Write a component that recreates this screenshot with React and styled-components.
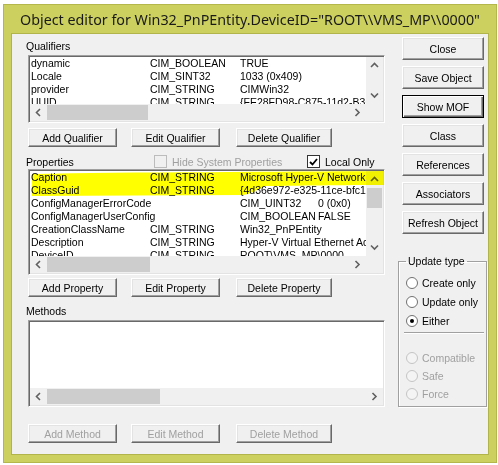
import React from "react";
import styled, { createGlobalStyle, css } from "styled-components";

const GlobalStyle = createGlobalStyle`
  html, body { margin: 0; padding: 0; background: #fff; }
  body { font-family: "Liberation Sans", Arial, sans-serif; font-size: 10.5px; color: #000; }
`;

const Frame = styled.div`
  box-sizing: border-box;
  width: 494px;
  height: 459px;
  margin: 4px 0 0 3px;
  background: #ccd05f;
  border: 1px solid #b4b84c;
  display: flex;
  flex-direction: column;
  padding: 0 7px 7px 7px;
`;

const TitleBar = styled.div`
  height: 28px;
  display: flex;
  align-items: center;
  padding-left: 9px;
  font-family: "Noto Sans", "Open Sans", sans-serif;
  font-size: 14.3px;
  color: #1a1a1a;
  white-space: nowrap;
  overflow: hidden;
`;

const Client = styled.div`
  flex: 1;
  background: #f0f0f0;
  border: 1px solid #b1b44a;
  display: grid;
  grid-template-columns: 357px 89px;
  column-gap: 13px;
  padding-left: 16px;
`;

const LeftCol = styled.div`
  display: flex;
  flex-direction: column;
  padding-top: 6px;
`;

const RightCol = styled.div`
  display: flex;
  flex-direction: column;
  padding-top: 3px;
`;

const SectionLabel = styled.div`
  height: 13px;
  line-height: 13px;
  margin-left: -2px;
  margin-top: ${(p) => p.$mt || 0}px;
  margin-bottom: 2px;
`;

const ListBox = styled.div`
  position: relative;
  box-sizing: border-box;
  height: ${(p) => p.$h}px;
  margin-top: ${(p) => p.$mt || 0}px;
  border: 1px solid;
  border-color: #a0a0a0 #fff #fff #a0a0a0;
  box-shadow: inset 1px 1px #696969, inset -1px -1px #e3e3e3;
  background: #fff;
  padding: 1px;
  display: grid;
  grid-template-columns: ${(p) => (p.$noV ? "1fr" : "1fr 17px")};
  grid-template-rows: 1fr 17px;
`;

const Rows = styled.div`
  overflow: hidden;
  padding-left: 1px;
`;

const Row = styled.div`
  display: flex;
  height: 13px;
  line-height: 13px;
  white-space: nowrap;
`;

const Cell = styled.span`
  flex: 0 0 auto;
  min-width: ${(p) => p.$w || 0}px;
  padding-right: 2px;
  box-sizing: border-box;
`;

const VScroll = styled.div`
  background: #f0f0f0;
  display: flex;
  flex-direction: column;
`;

const HScroll = styled.div`
  background: #f0f0f0;
  display: flex;
  align-items: center;
  grid-column: 1;
`;

const Corner = styled.div`
  background: #f0f0f0;
`;

const Arrow = styled.div`
  flex: 0 0 17px;
  height: ${(p) => (p.$v ? "17px" : "100%")};
  width: 17px;
  display: flex;
  align-items: center;
  justify-content: center;
`;

const Track = styled.div`
  flex: 1;
  align-self: stretch;
  display: flex;
  flex-direction: ${(p) => (p.$v ? "column" : "row")};
`;

const Thumb = styled.div`
  background: #cdcdcd;
  ${(p) =>
    p.$v
      ? css`
          height: ${p.$len}px;
          margin: 0 1px;
        `
      : css`
          width: ${p.$len}px;
          margin: 1px 0;
        `}
`;

const Highlight = styled.svg`
  position: absolute;
  left: 0;
  top: 0;
  width: 357px;
  height: 30px;
  pointer-events: none;
  mix-blend-mode: multiply;
`;

const ButtonRow = styled.div`
  display: flex;
  margin-top: ${(p) => p.$mt || 0}px;
`;

const Button = styled.button`
  box-sizing: border-box;
  width: ${(p) => p.$w}px;
  height: ${(p) => p.$h || 19}px;
  margin-left: ${(p) => p.$ml || 0}px;
  margin-top: ${(p) => p.$mt || 0}px;
  padding: 0;
  font-family: "Liberation Sans", Arial, sans-serif;
  font-size: 10.5px;
  color: ${(p) => (p.disabled ? "#a0a0a0" : "#000")};
  background: #f0f0f0;
  border: 1px solid;
  border-color: #fff #696969 #696969 #fff;
  box-shadow: inset -1px -1px #a0a0a0, inset 1px 1px #e3e3e3;
  ${(p) =>
    p.$default &&
    css`
      border-color: #000;
      box-shadow: inset 1px 1px #fff, inset -1px -1px #696969, inset -2px -2px #a0a0a0;
    `}
`;

const PropHeader = styled.div`
  display: grid;
  grid-template-columns: 128px 153px auto;
  align-items: center;
  height: 13px;
  margin: 8px 0 0 -2px;
`;

const CheckLine = styled.label`
  display: flex;
  align-items: center;
  gap: 5px;
  white-space: nowrap;
  color: ${(p) => (p.$disabled ? "#a0a0a0" : "#000")};
`;

const Box = styled.span`
  box-sizing: border-box;
  width: 13px;
  height: 13px;
  border: 1px solid ${(p) => (p.$disabled ? "#bcbcbc" : "#333")};
  background: ${(p) => (p.$disabled ? "#f0f0f0" : "#fff")};
  display: flex;
  align-items: center;
  justify-content: center;
`;

const Group = styled.fieldset`
  box-sizing: border-box;
  margin: 21px 0 0 0;
  padding: 0;
  height: 152px;
  border: 1px solid #a0a0a0;
  box-shadow: 1px 1px 0 #fff, inset 1px 1px 0 #fff;
`;

const Legend = styled.legend`
  margin-left: 7px;
  padding: 0 2px;
  line-height: 13px;
  font-size: 10.5px;
`;

const RadioRow = styled.div`
  display: flex;
  align-items: center;
  gap: 4px;
  height: ${(p) => p.$h}px;
  padding-left: 7px;
  margin-top: ${(p) => p.$mt || 0}px;
  white-space: nowrap;
  color: ${(p) => (p.$disabled ? "#a0a0a0" : "#000")};
`;

const Circle = styled.span`
  box-sizing: border-box;
  width: 12px;
  height: 12px;
  border-radius: 50%;
  border: 1px solid ${(p) => (p.$disabled ? "#c4c4c4" : "#707070")};
  background: ${(p) => (p.$disabled ? "#f4f4f4" : "#fff")};
  display: flex;
  align-items: center;
  justify-content: center;
  &::after {
    content: "";
    width: 4px;
    height: 4px;
    border-radius: 50%;
    background: ${(p) => (p.$on ? "#000" : "transparent")};
  }
`;

const Separator = styled.div`
  height: 1px;
  margin: 2px 2px 0 5px;
  background: #a0a0a0;
  box-shadow: 0 1px 0 #fff;
`;

const Chevron = ({ dir }) => {
  const pts = {
    up: "1,5 4.5,1.5 8,5",
    down: "1,1.5 4.5,5 8,1.5",
    left: "5,1 1.5,4.5 5,8",
    right: "1.5,1 5,4.5 1.5,8",
  }[dir];
  const vert = dir === "up" || dir === "down";
  return (
    <svg width={vert ? 9 : 7} height={vert ? 7 : 9} viewBox={vert ? "0 0 9 7" : "0 0 7 9"}>
      <polyline points={pts} fill="none" stroke="#606060" strokeWidth="1.6" />
    </svg>
  );
};

const HBar = ({ thumb }) => (
  <HScroll>
    <Arrow>
      <Chevron dir="left" />
    </Arrow>
    <Track>
      <Thumb $len={thumb} />
    </Track>
    <Arrow>
      <Chevron dir="right" />
    </Arrow>
  </HScroll>
);

const VBar = ({ thumb }) => (
  <VScroll>
    <Arrow $v>
      <Chevron dir="up" />
    </Arrow>
    <Track $v>{thumb ? <Thumb $v $len={thumb} /> : null}</Track>
    <Arrow $v>
      <Chevron dir="down" />
    </Arrow>
  </VScroll>
);

const QUALIFIERS = [
  ["dynamic", "CIM_BOOLEAN", "TRUE"],
  ["Locale", "CIM_SINT32", "1033 (0x409)"],
  ["provider", "CIM_STRING", "CIMWin32"],
  ["UUID", "CIM_STRING", "{FE28FD98-C875-11d2-B352-00104BC97924}"],
];

const PROPERTIES = [
  ["Caption", "CIM_STRING", "Microsoft Hyper-V Network Adapter"],
  ["ClassGuid", "CIM_STRING", "{4d36e972-e325-11ce-bfc1-08002be10318}"],
  ["ConfigManagerErrorCode", "CIM_UINT32", "0 (0x0)", true],
  ["ConfigManagerUserConfig", "CIM_BOOLEAN", "FALSE", true],
  ["CreationClassName", "CIM_STRING", "Win32_PnPEntity"],
  ["Description", "CIM_STRING", "Hyper-V Virtual Ethernet Adapter"],
  ["DeviceID", "CIM_STRING", "ROOT\\VMS_MP\\0000"],
];

const DataRows = ({ rows }) => (
  <Rows>
    {rows.map(([name, type, value, wide]) => (
      <Row key={name}>
        <Cell $w={wide ? 209 : 119}>{name}</Cell>
        <Cell $w={wide ? 78 : 90}>{type}</Cell>
        <Cell>{value}</Cell>
      </Row>
    ))}
  </Rows>
);

const Radio = ({ label, on, disabled, h, mt }) => (
  <RadioRow $h={h} $mt={mt} $disabled={disabled}>
    <Circle $on={on} $disabled={disabled} />
    {label}
  </RadioRow>
);

export default function App() {
  return (
    <>
      <GlobalStyle />
      <Frame>
        <TitleBar>{'Object editor for Win32_PnPEntity.DeviceID="ROOT\\\\VMS_MP\\\\0000"'}</TitleBar>
        <Client>
          <LeftCol>
            <SectionLabel>Qualifiers</SectionLabel>
            <ListBox $h={68}>
              <DataRows rows={QUALIFIERS} />
              <VBar />
              <HBar thumb={101} />
              <Corner />
            </ListBox>
            <ButtonRow $mt={5}>
              <Button $w={89}>Add Qualifier</Button>
              <Button $w={89} $ml={14}>Edit Qualifier</Button>
              <Button $w={96} $ml={16}>Delete Qualifier</Button>
            </ButtonRow>

            <PropHeader>
              <span>Properties</span>
              <CheckLine $disabled>
                <Box $disabled />
                Hide System Properties
              </CheckLine>
              <CheckLine>
                <Box>
                  <svg width="9" height="8" viewBox="0 0 9 8">
                    <polyline points="1,4 3.5,6.5 8,1" fill="none" stroke="#000" strokeWidth="1.8" />
                  </svg>
                </Box>
                Local Only
              </CheckLine>
            </PropHeader>
            <ListBox $h={106} $mt={1}>
              <DataRows rows={PROPERTIES} />
              <VBar thumb={20} />
              <HBar thumb={103} />
              <Corner />
              <Highlight viewBox="0 0 357 30" preserveAspectRatio="none">
                <path
                  d="M3,4 C100,2 250,2 355,1 L355,15 C300,15 260,16 236,16 C228,20 222,24 214,25 L3,26 Z"
                  fill="#ffff00"
                />
              </Highlight>
            </ListBox>
            <ButtonRow $mt={3}>
              <Button $w={89}>Add Property</Button>
              <Button $w={89} $ml={14}>Edit Property</Button>
              <Button $w={96} $ml={16}>Delete Property</Button>
            </ButtonRow>

            <SectionLabel $mt={8}>Methods</SectionLabel>
            <ListBox $h={87} $noV>
              <Rows />
              <HBar thumb={113} />
            </ListBox>
            <ButtonRow $mt={17}>
              <Button $w={89} disabled>Add Method</Button>
              <Button $w={89} $ml={14} disabled>Edit Method</Button>
              <Button $w={96} $ml={16} disabled>Delete Method</Button>
            </ButtonRow>
          </LeftCol>

          <RightCol>
            <Button $w={82} $h={23} $ml={4}>Close</Button>
            <Button $w={82} $h={23} $ml={4} $mt={6}>Save Object</Button>
            <Button $w={82} $h={23} $ml={4} $mt={6} $default>Show MOF</Button>
            <Button $w={82} $h={23} $ml={4} $mt={6}>Class</Button>
            <Button $w={82} $h={23} $ml={4} $mt={6}>References</Button>
            <Button $w={82} $h={23} $ml={4} $mt={6}>Associators</Button>
            <Button $w={82} $h={23} $ml={4} $mt={6}>Refresh Object</Button>
            <Group>
              <Legend>Update type</Legend>
              <Radio label="Create only" h={19} mt={5} />
              <Radio label="Update only" h={19} />
              <Radio label="Either" h={19} on />
              <Separator />
              <Radio label="Compatible" h={18} mt={16} disabled />
              <Radio label="Safe" h={18} disabled />
              <Radio label="Force" h={18} disabled />
            </Group>
          </RightCol>
        </Client>
      </Frame>
    </>
  );
}
